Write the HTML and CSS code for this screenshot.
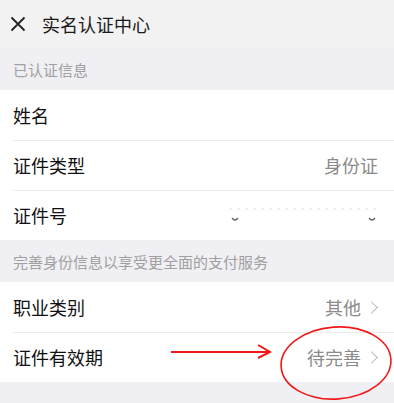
FILE: index.html
```html
<!DOCTYPE html>
<html>

<head lang="zh">
	<meta charset="UTF-8">
	<title>实名认证中心</title>
	<link rel="stylesheet" href="styles.css">
</head>

<body>
	<div class="page">
		<div class="nav">
			<svg class="close" width="16" height="16" viewBox="0 0 16 16">
				<path d="M1.5 1.5L14.5 14.5M14.5 1.5L1.5 14.5" stroke="#222" stroke-width="1.8" fill="none" />
			</svg>
			<span class="title">实名认证中心</span>
		</div>

		<div class="group-title">已认证信息</div>
		<ul class="list">
			<li class="cell"><span class="label">姓名</span></li>
			<li class="cell"><span class="label">证件类型</span><span class="value">身份证</span></li>
			<li class="cell">
				<span class="label">证件号</span>
				<span class="masked">
					<svg width="152" height="20" viewBox="0 0 152 20">
						<line x1="2" y1="4" x2="150" y2="4" stroke="#ccc" stroke-width="1.2" stroke-dasharray="1.5 6.5" />
						<path d="M4 13q3 4 6 0" stroke="#666" stroke-width="1.3" fill="none" />
						<path d="M141 13q3 4 6 0" stroke="#666" stroke-width="1.3" fill="none" />
					</svg>
				</span>
			</li>
		</ul>

		<div class="group-title">完善身份信息以享受更全面的支付服务</div>
		<ul class="list">
			<li class="cell"><span class="label">职业类别</span><span class="value">其他</span><span class="arrow"></span></li>
			<li class="cell"><span class="label">证件有效期</span><span class="value">待完善</span><span class="arrow"></span></li>
		</ul>

		<svg class="mark" width="394" height="403" viewBox="0 0 394 403">
			<path d="M171 352H268" stroke="#f01818" stroke-width="2" fill="none" />
			<path d="M258 345L270 352L258 358" stroke="#f01818" stroke-width="2" fill="none" />
			<ellipse cx="336" cy="363" rx="55" ry="36" stroke="#f01818" stroke-width="1.6" fill="none" transform="rotate(-4 336 363)" />
		</svg>
	</div>
</body>

</html>
```

FILE: styles.css
```css
* {
	margin: 0;
	padding: 0;
}

body {
	background: #efeff4;
	font-family: "Noto Sans CJK SC", "Noto Sans", sans-serif;
	color: #111;
}

.page {
	position: relative;
	width: 394px;
	height: 403px;
	overflow: hidden;
}

.nav {
	height: 48px;
	background: #f2f2f2;
	display: flex;
	align-items: center;
	padding-left: 10px;
	gap: 16px;
}

.nav .title {
	font-size: 18px;
	color: #1a1a1a;
	line-height: 1;
}

.group-title {
	height: 42px;
	display: flex;
	align-items: center;
	padding-left: 13px;
	font-size: 15px;
	color: #a0a0a0;
}

.list {
	list-style: none;
	background: #fff;
}

.cell {
	height: 50px;
	display: flex;
	align-items: center;
	padding: 0 16px 0 13px;
	position: relative;
	font-size: 18px;
}

.cell + .cell::before {
	content: "";
	position: absolute;
	left: 13px;
	right: 0;
	top: 0;
	border-top: 1px solid #ececec;
}

.cell .label {
	flex: 1;
	line-height: 1;
}

.cell .value {
	color: #8a8a8a;
	line-height: 1;
}

.cell .masked {
	display: flex;
	margin-right: -2px;
}

.cell .arrow {
	width: 8px;
	height: 8px;
	border-top: 1.5px solid #b8b8b8;
	border-right: 1.5px solid #b8b8b8;
	transform: rotate(45deg);
	margin-left: 6px;
	margin-right: 2px;
}

.mark {
	position: absolute;
	left: 0;
	top: 0;
	pointer-events: none;
}
```
